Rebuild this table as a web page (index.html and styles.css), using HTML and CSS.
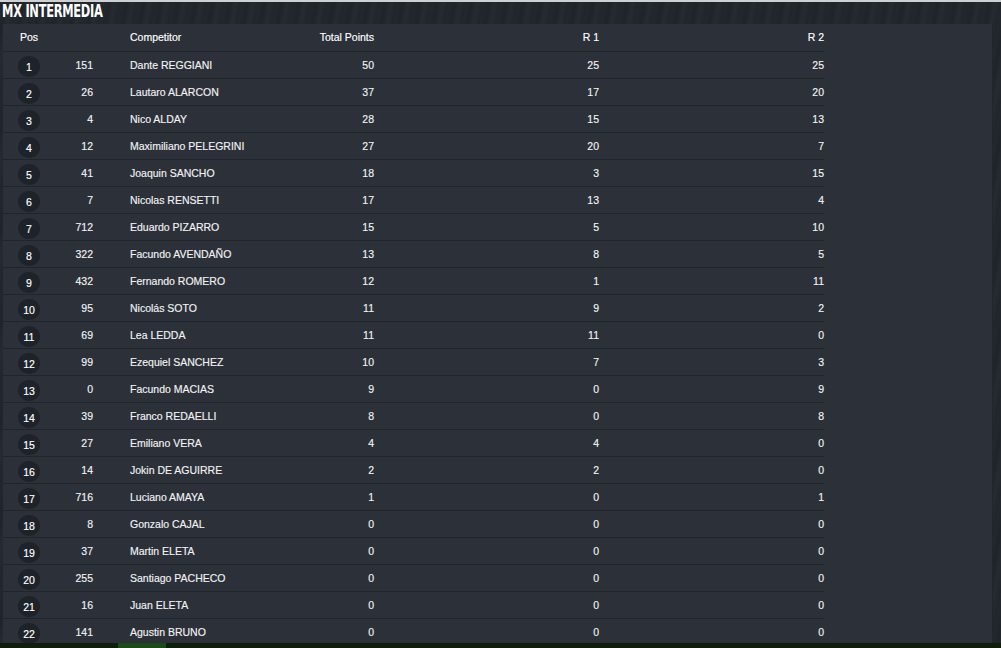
FILE: index.html
```html
<!DOCTYPE html>
<html lang="es">
<head>
<meta charset="utf-8">
<title>MX INTERMEDIA</title>
<link rel="stylesheet" href="styles.css">
</head>
<body>
<div class="topline"></div>
<div class="page">
  <h1 class="title">MX INTERMEDIA</h1>
  <div class="panel">
    <div class="table">
      <div class="row head">
        <div class="c pos">Pos</div><div class="c num"></div><div class="c name">Competitor</div><div class="c r">Total Points</div><div class="c r">R 1</div><div class="c r">R 2</div>
      </div>
      <div class="row"><div class="c pos"><span class="badge">1</span></div><div class="c num">151</div><div class="c name">Dante REGGIANI</div><div class="c r">50</div><div class="c r">25</div><div class="c r">25</div></div>
      <div class="row"><div class="c pos"><span class="badge">2</span></div><div class="c num">26</div><div class="c name">Lautaro ALARCON</div><div class="c r">37</div><div class="c r">17</div><div class="c r">20</div></div>
      <div class="row"><div class="c pos"><span class="badge">3</span></div><div class="c num">4</div><div class="c name">Nico ALDAY</div><div class="c r">28</div><div class="c r">15</div><div class="c r">13</div></div>
      <div class="row"><div class="c pos"><span class="badge">4</span></div><div class="c num">12</div><div class="c name">Maximiliano PELEGRINI</div><div class="c r">27</div><div class="c r">20</div><div class="c r">7</div></div>
      <div class="row"><div class="c pos"><span class="badge">5</span></div><div class="c num">41</div><div class="c name">Joaquin SANCHO</div><div class="c r">18</div><div class="c r">3</div><div class="c r">15</div></div>
      <div class="row"><div class="c pos"><span class="badge">6</span></div><div class="c num">7</div><div class="c name">Nicolas RENSETTI</div><div class="c r">17</div><div class="c r">13</div><div class="c r">4</div></div>
      <div class="row"><div class="c pos"><span class="badge">7</span></div><div class="c num">712</div><div class="c name">Eduardo PIZARRO</div><div class="c r">15</div><div class="c r">5</div><div class="c r">10</div></div>
      <div class="row"><div class="c pos"><span class="badge">8</span></div><div class="c num">322</div><div class="c name">Facundo AVENDAÑO</div><div class="c r">13</div><div class="c r">8</div><div class="c r">5</div></div>
      <div class="row"><div class="c pos"><span class="badge">9</span></div><div class="c num">432</div><div class="c name">Fernando ROMERO</div><div class="c r">12</div><div class="c r">1</div><div class="c r">11</div></div>
      <div class="row"><div class="c pos"><span class="badge">10</span></div><div class="c num">95</div><div class="c name">Nicolás SOTO</div><div class="c r">11</div><div class="c r">9</div><div class="c r">2</div></div>
      <div class="row"><div class="c pos"><span class="badge">11</span></div><div class="c num">69</div><div class="c name">Lea LEDDA</div><div class="c r">11</div><div class="c r">11</div><div class="c r">0</div></div>
      <div class="row"><div class="c pos"><span class="badge">12</span></div><div class="c num">99</div><div class="c name">Ezequiel SANCHEZ</div><div class="c r">10</div><div class="c r">7</div><div class="c r">3</div></div>
      <div class="row"><div class="c pos"><span class="badge">13</span></div><div class="c num">0</div><div class="c name">Facundo MACIAS</div><div class="c r">9</div><div class="c r">0</div><div class="c r">9</div></div>
      <div class="row"><div class="c pos"><span class="badge">14</span></div><div class="c num">39</div><div class="c name">Franco REDAELLI</div><div class="c r">8</div><div class="c r">0</div><div class="c r">8</div></div>
      <div class="row"><div class="c pos"><span class="badge">15</span></div><div class="c num">27</div><div class="c name">Emiliano VERA</div><div class="c r">4</div><div class="c r">4</div><div class="c r">0</div></div>
      <div class="row"><div class="c pos"><span class="badge">16</span></div><div class="c num">14</div><div class="c name">Jokin DE AGUIRRE</div><div class="c r">2</div><div class="c r">2</div><div class="c r">0</div></div>
      <div class="row"><div class="c pos"><span class="badge">17</span></div><div class="c num">716</div><div class="c name">Luciano AMAYA</div><div class="c r">1</div><div class="c r">0</div><div class="c r">1</div></div>
      <div class="row"><div class="c pos"><span class="badge">18</span></div><div class="c num">8</div><div class="c name">Gonzalo CAJAL</div><div class="c r">0</div><div class="c r">0</div><div class="c r">0</div></div>
      <div class="row"><div class="c pos"><span class="badge">19</span></div><div class="c num">37</div><div class="c name">Martin ELETA</div><div class="c r">0</div><div class="c r">0</div><div class="c r">0</div></div>
      <div class="row"><div class="c pos"><span class="badge">20</span></div><div class="c num">255</div><div class="c name">Santiago PACHECO</div><div class="c r">0</div><div class="c r">0</div><div class="c r">0</div></div>
      <div class="row"><div class="c pos"><span class="badge">21</span></div><div class="c num">16</div><div class="c name">Juan ELETA</div><div class="c r">0</div><div class="c r">0</div><div class="c r">0</div></div>
      <div class="row"><div class="c pos"><span class="badge">22</span></div><div class="c num">141</div><div class="c name">Agustin BRUNO</div><div class="c r">0</div><div class="c r">0</div><div class="c r">0</div></div>
    </div>
  </div>
  <div class="footer"><span class="footer-tab"></span></div>
</div>
</body>
</html>
```

FILE: styles.css
```css
html, body {
  margin: 0;
  padding: 0;
  height: 100%;
  overflow: hidden;
}
body {
  background: #272b32;
  font-family: "Liberation Sans", Arial, sans-serif;
  font-size: 10.5px;
  color: #f2f2f2;
}
.topline {
  height: 2px;
  background: #cfd0d1;
}
.page {
  background:
    repeating-linear-gradient(100deg, #23282e 0, #1f242a 6px, #262b31 11px, #20252b 17px);
  height: 646px;
  display: flex;
  flex-direction: column;
}
.title {
  margin: 0;
  height: 22px;
  padding-left: 3px;
  font-family: "Liberation Sans Narrow", "DejaVu Sans Condensed", "Liberation Sans", sans-serif;
  font-weight: 700;
  font-size: 18px;
  line-height: 17px;
  color: #ffffff;
  letter-spacing: -0.4px;
  transform: scaleX(0.705);
  transform-origin: left top;
}
.panel {
  margin-left: 3px;
  width: 990px;
  height: 619px;
  background: #2b3039;
  border-right: 1px solid #22262c;
  overflow: hidden;
  box-sizing: border-box;
}
.table {
  width: 821px;
}
.row {
  display: grid;
  grid-template-columns: 57px 33px 157px 124px 225px 225px;
  height: 25px;
  padding-bottom: 1px;
  border-bottom: 1px solid #20242b;
  align-items: center;
  -webkit-text-stroke: 0.15px currentColor;
}
.head {
  height: 26px;
  padding-bottom: 1px;
  color: #ffffff;
}
.c {
  white-space: nowrap;
}
.pos {
  padding-left: 15px;
}
.head .pos {
  padding-left: 17px;
}
.num {
  text-align: right;
}
.name {
  padding-left: 37px;
}
.r {
  text-align: right;
}
.badge {
  display: flex;
  width: 22px;
  height: 21px;
  margin-top: 3px;
  border-radius: 50%;
  background: #1e2229;
  align-items: center;
  justify-content: center;
  padding-top: 2px;
  box-sizing: border-box;
  color: #ffffff;
}
.footer {
  height: 5px;
  background: #0f1e0b;
  position: relative;
}
.footer-tab {
  position: absolute;
  left: 118px;
  top: 0;
  width: 48px;
  height: 5px;
  background: #1c4a19;
}
```
